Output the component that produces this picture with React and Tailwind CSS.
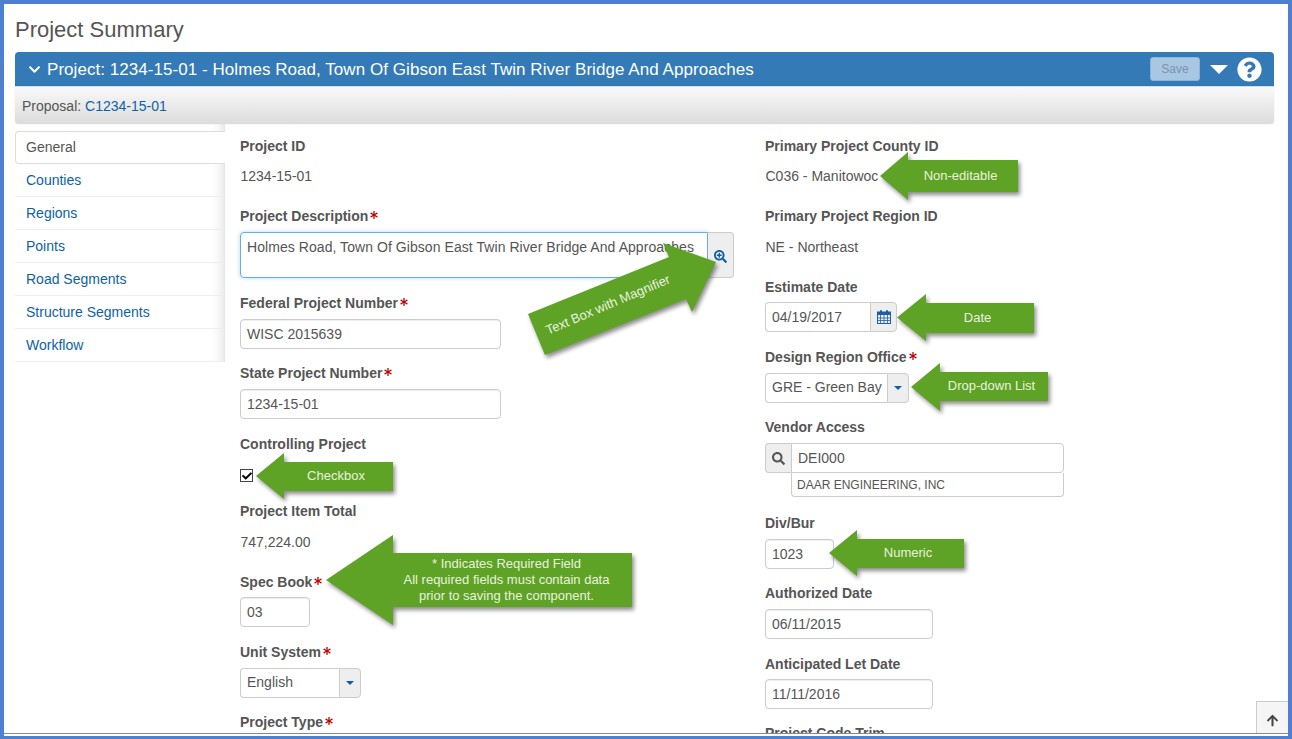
import React from 'react';
import { FaAsterisk, FaArrowUp, FaCheck, FaChevronDown, FaQuestionCircle, FaSearch, FaSearchPlus } from 'react-icons/fa';

const navItems = ['Counties', 'Regions', 'Points', 'Road Segments', 'Structure Segments', 'Workflow'];

const Label = ({ children, required }) => (
  <div className="h-5 flex items-center gap-[2px] font-bold text-[#555] leading-5">
    {children}
    {required && <FaAsterisk className="text-[#c00000] w-[8px] h-[8px] -mt-[2px]" />}
  </div>
);

const Value = ({ children, className = 'mt-[5px]' }) => <div className={`h-[30px] pl-[0.5px] leading-[30px] text-[#555] ${className}`}>{children}</div>;

const Input = ({ value, className }) => (
  <div className={`h-[30px] mt-[6px] border border-[#ccc] rounded px-[6px] leading-[28px] text-[#555] shadow-[inset_0_1px_1px_rgba(0,0,0,0.07)] ${className}`}>{value}</div>
);

const Addon = ({ children, className }) => (
  <div className={`flex items-center justify-center bg-[#eee] border border-[#ccc] rounded-r ${className}`}>{children}</div>
);

const SelectBox = ({ value, width, addon }) => (
  <div className={`flex h-[30px] mt-[6px] ${width}`}>
    <div className="flex-1 border border-[#ccc] border-r-0 rounded-l px-[6px] leading-[27px] text-[#555] whitespace-nowrap overflow-hidden">{value}</div>
    <Addon className={addon}>
      <span className="w-0 h-0 border-l-[4px] border-r-[4px] border-t-[4px] border-l-transparent border-r-transparent border-t-[#0b5fa5]" />
    </Addon>
  </div>
);

const CalendarIcon = () => (
  <svg width="14" height="14" viewBox="0 0 14 14" className="text-[#1c5fa8]">
    <rect x="0.5" y="2" width="13" height="11.5" fill="none" stroke="currentColor" />
    <rect x="0" y="2" width="14" height="3" fill="currentColor" />
    <rect x="3" y="0" width="2" height="3.5" rx="1" fill="currentColor" />
    <rect x="9" y="0" width="2" height="3.5" rx="1" fill="currentColor" />
    <path d="M3.5 5v8M7 5v8M10.5 5v8M0 8h14M0 10.5h14" stroke="currentColor" strokeWidth="0.8" fill="none" />
  </svg>
);

const Callout = ({ pos, w, h, head, top, bottom, children }) => (
  <div className={`absolute ${pos}`}>
    <svg width={w} height={h} className="block overflow-visible drop-shadow-[2px_3px_2px_rgba(0,0,0,0.45)]">
      <polygon fill="#5ea226" points={`0,${h / 2} ${head},0 ${head},${top} ${w},${top} ${w},${bottom} ${head},${bottom} ${head},${h}`} />
    </svg>
    <div className="absolute right-[5px] flex items-center justify-center text-center text-[#e9f3df] text-[13px] leading-4 pb-px" style={{ left: head, top, height: bottom - top }}>
      {children}
    </div>
  </div>
);

export default function App() {
  return (
    <div className="relative w-[1292px] h-[739px] overflow-hidden bg-white text-sm font-['Liberation_Sans',Arial,sans-serif]">
      <div className="h-full flex flex-col border-[4px] border-b-[3px] border-[#4f7fd1]">
        <div className="h-[729px] overflow-hidden px-[11px] pr-[14px]">
          <h1 className="h-[48px] pt-[10px] text-[22px] leading-8 text-[#555]">Project Summary</h1>

          <div className="h-[34px] flex items-center bg-[#337ab7] rounded-t text-white pl-[13px] pr-[12px]">
            <FaChevronDown className="w-[13px] h-[13px]" />
            <span className="ml-[6px] pt-[3px] text-[17px] tracking-[0.05px]">Project: 1234-15-01 - Holmes Road, Town Of Gibson East Twin River Bridge And Approaches</span>
            <div className="ml-auto w-[50px] h-6 flex items-center justify-center bg-[#a9c6e2] border border-[#8fb3d6] rounded-[3px] text-xs text-[#7b93ae]">Save</div>
            <span className="ml-[10px] w-0 h-0 border-l-[9px] border-r-[9px] border-t-[9px] border-l-transparent border-r-transparent border-t-white" />
            <FaQuestionCircle className="ml-[9px] w-[25px] h-[25px]" />
          </div>
          <div className="h-[38px] flex items-center pl-[7px] border-t border-[#d5dde6] rounded-b shadow-[0_0_1px_rgba(0,0,0,0.25)] bg-gradient-to-b from-[#f9f9f9] to-[#dcdcdc] text-[#555]">
            Proposal:&nbsp;<span className="text-[#0b62a8]">C1234-15-01</span>
          </div>

          <div className="flex">
            <div className="w-[210px] h-[238px] pt-[7px] shadow-[inset_-14px_0_14px_-14px_rgba(0,0,0,0.16)] border-r border-[#e6e6e6]">
              <div className="h-[33px] -mr-px flex items-center pl-[10px] pb-[2px] bg-white border border-r-0 border-[#ddd] rounded-l text-[#555]">General</div>
              {navItems.map((item) => (
                <div key={item} className="h-[33px] flex items-center pl-[11px] border-b border-[#eee] text-[#0b62a8]">{item}</div>
              ))}
            </div>

            <div className="flex-1 grid grid-cols-[525px_1fr] pl-[15px] pt-[12px]">
              <div className="flex flex-col">
                <Label>Project ID</Label>
                <Value>1234-15-01</Value>
                <div className="mt-[15px]"><Label required>Project Description</Label></div>
                <div className="flex h-[46px] mt-[6px] w-[494px]">
                  <div className="flex-1 border border-[#66afe9] rounded-l px-[6px] pt-[4px] leading-[20px] tracking-[0.06px] text-[#555] shadow-[0_0_4px_rgba(102,175,233,0.5)]">Holmes Road, Town Of Gibson East Twin River Bridge And Approaches</div>
                  <Addon className="w-[26px] border-l-0 pt-[2px]"><FaSearchPlus className="w-[13px] h-[13px] text-[#0b5fa5]" /></Addon>
                </div>
                <div className="mt-[15px]"><Label required>Federal Project Number</Label></div>
                <Input value="WISC 2015639" className="w-[261px]" />
                <div className="mt-[14px]"><Label required>State Project Number</Label></div>
                <Input value="1234-15-01" className="w-[261px]" />
                <div className="mt-[15px]"><Label>Controlling Project</Label></div>
                <div className="h-[13px] w-[13px] mt-[15px] flex items-center justify-center border border-[#444] bg-white">
                  <FaCheck className="w-[10px] h-[10px] text-black" />
                </div>
                <div className="mt-[19px]"><Label>Project Item Total</Label></div>
                <Value className="mt-[6px]">747,224.00</Value>
                <div className="mt-[15px]"><Label required>Spec Book</Label></div>
                <Input value="03" className="w-[70px] !mt-[5px]" />
                <div className="mt-[15px]"><Label required>Unit System</Label></div>
                <SelectBox value="English" width="w-[121px]" addon="w-[22px]" />
                <div className="mt-[14px]"><Label required>Project Type</Label></div>
              </div>

              <div className="flex flex-col">
                <Label>Primary Project County ID</Label>
                <Value>C036 - Manitowoc</Value>
                <div className="mt-[15px]"><Label>Primary Project Region ID</Label></div>
                <Value className="mt-[6px]">NE - Northeast</Value>
                <div className="mt-[15px]"><Label>Estimate Date</Label></div>
                <div className="flex h-[30px] mt-[5px] w-[132px]">
                  <div className="flex-1 border border-[#ccc] border-r-0 rounded-l px-[6px] leading-[28px] text-[#555]">04/19/2017</div>
                  <Addon className="w-[27px]"><CalendarIcon /></Addon>
                </div>
                <div className="mt-[15px]"><Label required>Design Region Office</Label></div>
                <SelectBox value="GRE - Green Bay" width="w-[144px]" addon="w-[22px]" />
                <div className="mt-[14px]"><Label>Vendor Access</Label></div>
                <div className="flex h-[30px] mt-[6px] w-[299px]">
                  <div className="w-[26px] flex items-center justify-center bg-[#eee] border border-[#ccc] border-r-0 rounded-l">
                    <FaSearch className="w-[13px] h-[13px] text-[#555]" />
                  </div>
                  <div className="flex-1 border border-[#ccc] rounded-r-[4px] px-[6px] leading-[28px] text-[#555]">DEI000</div>
                </div>
                <div className="h-[24px] ml-[26px] w-[273px] border border-t-0 border-[#ccc] rounded-b px-[5px] leading-[24px] text-xs text-[#555]">DAAR ENGINEERING, INC</div>
                <div className="mt-[16px]"><Label>Div/Bur</Label></div>
                <Input value="1023" className="w-[69px]" />
                <div className="mt-[14px]"><Label>Authorized Date</Label></div>
                <Input value="06/11/2015" className="w-[168px]" />
                <div className="mt-[15px]"><Label>Anticipated Let Date</Label></div>
                <Input value="11/11/2016" className="w-[168px] !mt-[5px]" />
                <div className="mt-[14px]"><Label>Project Code Trim</Label></div>
              </div>
            </div>
          </div>
        </div>
        <div className="flex-1 border-t border-[#8a8a8a]" />
      </div>

      {/* scroll to top */}
      <div className="absolute left-[1256px] top-[701px] w-[32px] h-[32px] flex items-center justify-center pt-[6px] bg-[#f5f5f5] border-t border-l border-[#ccc]">
        <FaArrowUp className="w-[13px] h-[13px] text-[#444]" />
      </div>

      {/* callouts */}
      <Callout pos="left-[880px] top-[152px]" w={138} h={48} head={28} top={8} bottom={40}>Non-editable</Callout>
      <Callout pos="left-[897px] top-[294px]" w={137} h={47} head={29} top={9} bottom={39}>Date</Callout>
      <Callout pos="left-[911px] top-[363px]" w={137} h={48} head={29} top={9} bottom={38}>Drop-down List</Callout>
      <Callout pos="left-[829px] top-[530px]" w={135} h={46} head={28} top={9} bottom={38}>Numeric</Callout>
      <Callout pos="left-[256px] top-[453px]" w={137} h={46} head={28} top={9} bottom={38}>Checkbox</Callout>
      <Callout pos="left-[326px] top-[535px]" w={306} h={90} head={67} top={18} bottom={72}>
        <span className="-ml-[7px]">* Indicates Required Field<br />All required fields must contain data<br />prior to saving the component.</span>
      </Callout>

      <svg width="1292" height="739" className="absolute left-0 top-0 pointer-events-none drop-shadow-[2px_3px_2px_rgba(0,0,0,0.45)]">
        <polygon fill="#5ea226" points="528,314 669,257 663,243 716,262 692,312 686,299 545,355" />
      </svg>
      <div className="absolute left-[518px] top-[297px] w-[180px] text-center text-[13px] leading-4 text-[#e9f3df] -rotate-[23deg]">Text Box with Magnifier</div>
    </div>
  );
}
